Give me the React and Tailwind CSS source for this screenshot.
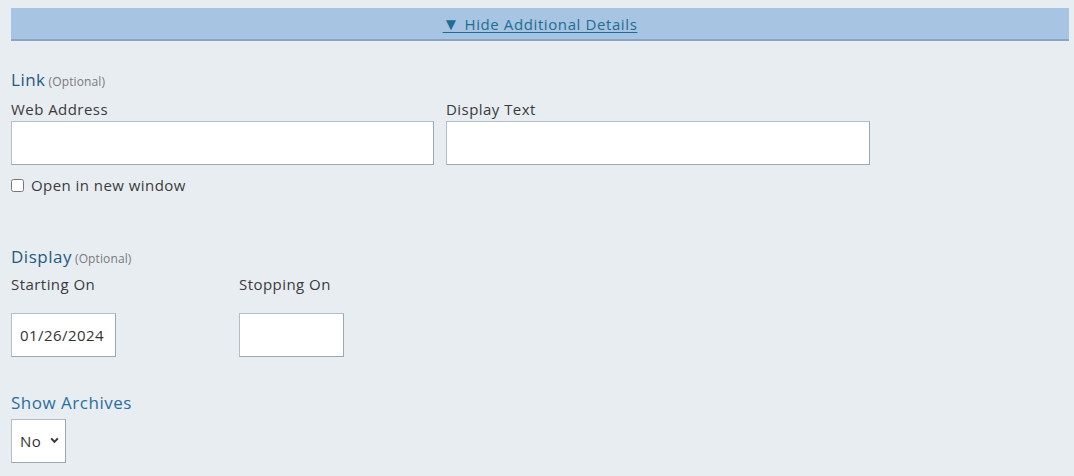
import { useState } from 'react'

const font = { fontFamily: '"Open Sans", "Liberation Sans", sans-serif' }

function Heading({ children, optional, className = '' }) {
  return (
    <div className={`flex items-baseline gap-[3px] leading-[24px] ${className}`}>
      <span className="text-[17px] tracking-[0.03em] text-[#255a80]">{children}</span>
      {optional && <span className="text-[12px] tracking-[0.01em] text-[#7a7a7a]">(Optional)</span>}
    </div>
  )
}

function Label({ children, className = '' }) {
  return (
    <div className={`text-[15px] leading-[22px] tracking-[0.03em] text-[#3b3b3b] ${className}`}>
      {children}
    </div>
  )
}

const inputCls =
  'h-[44px] bg-white border border-[#b4bec9] border-r-[#9aa7b5] border-b-[#9aa7b5] px-2 text-[15px] tracking-[0.03em] text-[#333] outline-none'

export default function App() {
  const [newWindow, setNewWindow] = useState(false)
  const [archives, setArchives] = useState('No')

  return (
    <div className="min-h-screen bg-[#e8edf2] pt-2 pl-[11px] pr-[5px] pb-4" style={font}>
      <div className="h-[33px] bg-[#a7c4e2] border-b-2 border-[#8ba6c5] flex items-center justify-center">
        <a href="#" className="text-[15px] tracking-[0.04em] text-[#1d6e92] underline underline-offset-2">
          <span className="text-[17px]">▼</span> Hide Additional Details
        </a>
      </div>

      <Heading optional className="mt-[27px]">Link</Heading>
      <div className="flex gap-[12px] mt-[4px]">
        <div className="w-[423px]">
          <Label>Web Address</Label>
          <input className={`${inputCls} w-full mt-px`} />
        </div>
        <div className="w-[424px]">
          <Label>Display Text</Label>
          <input className={`${inputCls} w-full mt-px`} />
        </div>
      </div>
      <label className="flex items-center gap-[7px] mt-[10px] h-[20px] text-[15px] tracking-[0.03em] text-[#3b3b3b]">
        <input
          type="checkbox"
          checked={newWindow}
          onChange={(e) => setNewWindow(e.target.checked)}
          className="w-[13px] h-[13px] m-0"
        />
        Open in new window
      </label>

      <Heading optional className="mt-[50px]">Display</Heading>
      <div className="flex mt-[2px]">
        <div className="w-[228px]">
          <Label>Starting On</Label>
          <input readOnly value="01/26/2024" className={`${inputCls} w-[105px] mt-[18px]`} />
        </div>
        <div>
          <Label>Stopping On</Label>
          <input className={`${inputCls} w-[105px] mt-[18px]`} />
        </div>
      </div>

      <Heading className="mt-[34px]">
        <span className="text-[#2b6e9e]">Show Archives</span>
      </Heading>
      <div className="relative w-[55px] mt-[4px]">
        <select
          value={archives}
          onChange={(e) => setArchives(e.target.value)}
          className={`${inputCls} w-full appearance-none pl-2 pr-4`}
        >
          <option>No</option>
          <option>Yes</option>
        </select>
        <svg
          viewBox="0 0 10 8"
          className="absolute right-[7px] top-[18px] w-[9px] h-[7px] pointer-events-none"
        >
          <path d="M1.2 1.5 L5 5.5 L8.8 1.5" fill="none" stroke="#333" strokeWidth="2.2" />
        </svg>
      </div>
    </div>
  )
}
